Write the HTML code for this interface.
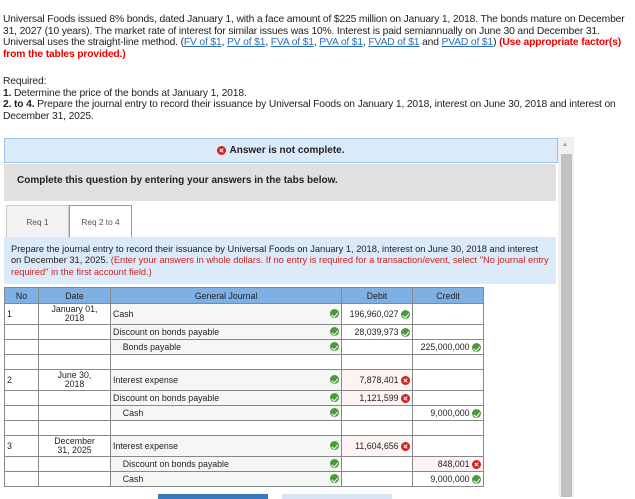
<!DOCTYPE html>
<html><head><style>
body{margin:0;width:635px;height:497px;overflow:hidden;background:#fff;font-family:"Liberation Sans",Arial,sans-serif;position:relative;color:#222}
.p{position:absolute;left:3px;font-size:10.3px;line-height:11.7px;width:628px;letter-spacing:-0.15px}
a{color:#2a6ebb;text-decoration:underline}
.red{color:#e00;font-weight:bold}
.ab{position:absolute}
.ok,.x{display:inline-block;width:9px;height:9px;border-radius:50%;vertical-align:middle;position:relative}
.ok{background:#4a9a3a}
.ok:after{content:"";position:absolute;left:2.5px;top:1.5px;width:2.5px;height:4.5px;border:solid #fff;border-width:0 1.4px 1.4px 0;transform:rotate(40deg)}
.x{background:#cc2222}
.x:before,.x:after{content:"";position:absolute;left:4px;top:2px;width:1.4px;height:5px;background:#fff;transform:rotate(45deg)}
.x:after{transform:rotate(-45deg)}
table{position:absolute;left:4px;top:287px;border-collapse:collapse;font-size:8.8px;table-layout:fixed}
td,th{border:1px solid #888;padding:0 2px;white-space:nowrap;overflow:hidden}
th{background:#7fb0e3;font-weight:normal;height:15px;color:#222}
td.g{background:#f5f7f4}
td.pk{background:#fdf3f2}
.r{text-align:right}
</style></head><body>
<div class="p" style="top:14px">Universal Foods issued 8% bonds, dated January 1, with a face amount of $225 million on January 1, 2018. The bonds mature on December 31, 2027 (10 years). The market rate of interest for similar issues was 10%. Interest is paid semiannually on June 30 and December 31. Universal uses the straight-line method. (<a>FV of $1</a>, <a>PV of $1</a>, <a>FVA of $1</a>, <a>PVA of $1</a>, <a>FVAD of $1</a> and <a>PVAD of $1</a>) <span class="red">(Use appropriate factor(s) from the tables provided.)</span></div>
<div class="p" style="top:76px">Required:<br><b>1.</b> Determine the price of the bonds at January 1, 2018.<br><b>2. to 4.</b> Prepare the journal entry to record their issuance by Universal Foods on January 1, 2018, interest on June 30, 2018 and interest on December 31, 2025.</div>

<div class="ab" style="left:4px;top:138px;width:552px;height:23px;background:#dbeaf8;border:1px solid #9cc3e6;font-size:10px;font-weight:bold;text-align:center;line-height:23px"><span class="x" style="margin-right:3px"></span>Answer is not complete.</div>
<div class="ab" style="left:4px;top:164px;width:552px;height:37px;background:#e0e0e0;font-size:10px;font-weight:bold;line-height:33px;padding-left:13px;box-sizing:border-box">Complete this question by entering your answers in the tabs below.</div>
<div class="ab" style="left:6px;top:205px;width:61px;height:32px;background:#f2f2f2;border:1px solid #ccc;border-bottom:none;font-size:8.3px;text-align:center;line-height:32px;color:#555">Req 1</div>
<div class="ab" style="left:69px;top:205px;width:61px;height:33px;background:#fff;border:1px solid #999;border-bottom:none;font-size:8.3px;text-align:center;line-height:32px;color:#555">Req 2 to 4</div>
<div class="ab" style="left:4px;top:237px;width:552px;height:47px;background:#dbeaf8;font-size:9.3px;line-height:11.3px;padding:7px 7px;box-sizing:border-box">Prepare the journal entry to record their issuance by Universal Foods on January 1, 2018, interest on June 30, 2018 and interest on December 31, 2025. <span style="color:#c22">(Enter your answers in whole dollars. If no entry is required for a transaction/event, select "No journal entry required" in the first account field.)</span></div>
<div class="ab" style="left:558px;top:137px;width:16px;height:360px;background:#f0f0f0"></div>
<div class="ab" style="left:561px;top:154px;width:11px;height:343px;background:#c1c1c1"></div>
<div class="ab" style="left:562px;top:142px;font-size:6px;color:#999">▲</div>

<table>
<colgroup><col style="width:34px"><col style="width:72px"><col style="width:231px"><col style="width:71px"><col style="width:71px"></colgroup>
<tr><th>No</th><th>Date</th><th>General Journal</th><th>Debit</th><th>Credit</th></tr>
<tr style="height:21px"><td>1</td><td style="text-align:center;line-height:9px">January 01,<br>2018</td><td class="g">Cash<span class="ok" style="float:right"></span></td><td class="r">196,960,027 <span class="ok"></span></td><td></td></tr>
<tr style="height:15px"><td></td><td></td><td class="g">Discount on bonds payable<span class="ok" style="float:right"></span></td><td class="r">28,039,973 <span class="ok"></span></td><td></td></tr>
<tr style="height:15px"><td></td><td></td><td class="g">&nbsp;&nbsp;&nbsp;&nbsp;Bonds payable<span class="ok" style="float:right"></span></td><td></td><td class="r">225,000,000 <span class="ok"></span></td></tr>
<tr style="height:15px"><td></td><td></td><td></td><td></td><td></td></tr>
<tr style="height:21px"><td>2</td><td style="text-align:center;line-height:9px">June 30,<br>2018</td><td class="g">Interest expense<span class="ok" style="float:right"></span></td><td class="r pk">7,878,401 <span class="x"></span></td><td></td></tr>
<tr style="height:15px"><td></td><td></td><td class="g">Discount on bonds payable<span class="ok" style="float:right"></span></td><td class="r pk">1,121,599 <span class="x"></span></td><td></td></tr>
<tr style="height:15px"><td></td><td></td><td class="g">&nbsp;&nbsp;&nbsp;&nbsp;Cash<span class="ok" style="float:right"></span></td><td></td><td class="r">9,000,000 <span class="ok"></span></td></tr>
<tr style="height:15px"><td></td><td></td><td></td><td></td><td></td></tr>
<tr style="height:21px"><td>3</td><td style="text-align:center;line-height:9px">December<br>31, 2025</td><td class="g">Interest expense<span class="ok" style="float:right"></span></td><td class="r pk">11,604,656 <span class="x"></span></td><td></td></tr>
<tr style="height:15px"><td></td><td></td><td class="g">&nbsp;&nbsp;&nbsp;&nbsp;Discount on bonds payable<span class="ok" style="float:right"></span></td><td></td><td class="r pk">848,001 <span class="x"></span></td></tr>
<tr style="height:15px"><td></td><td></td><td class="g">&nbsp;&nbsp;&nbsp;&nbsp;Cash<span class="ok" style="float:right"></span></td><td></td><td class="r">9,000,000 <span class="ok"></span></td></tr>
</table>
<div class="ab" style="left:158px;top:494px;width:110px;height:5px;background:#3a78c0"></div>
<div class="ab" style="left:282px;top:494px;width:110px;height:5px;background:#d6e4f3"></div>
</body></html>
